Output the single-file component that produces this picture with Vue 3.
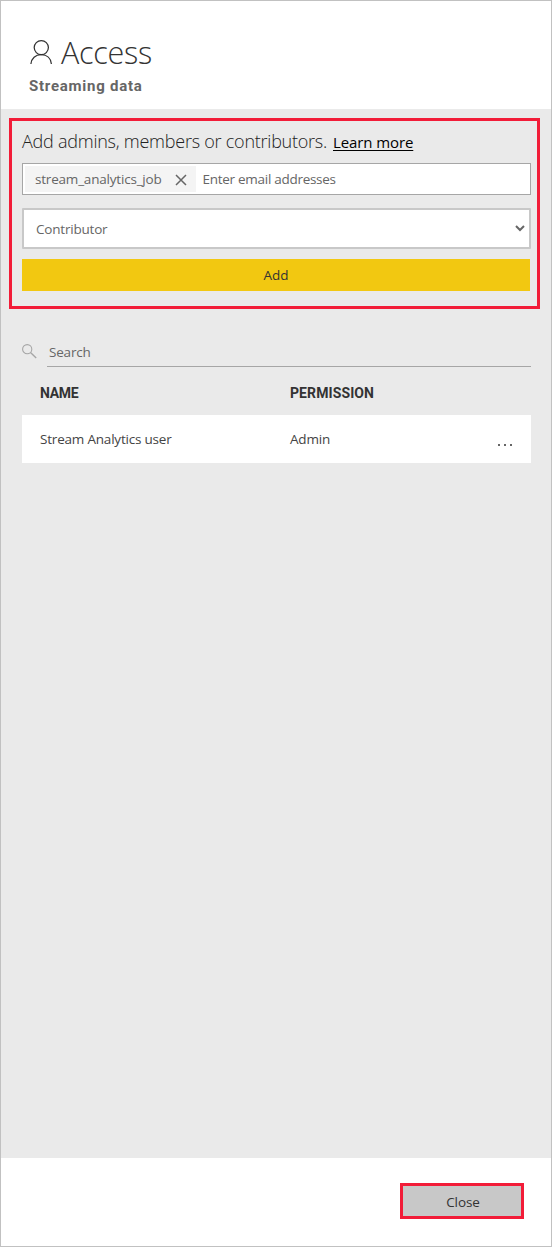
<script setup>
const chips = ['stream_analytics_job']
const users = [{ name: 'Stream Analytics user', permission: 'Admin' }]
</script>

<template>
  <section class="panel">
    <header class="header">
      <div class="title-row">
        <svg class="person" width="24" height="26" viewBox="0 0 24 26" fill="none" stroke="#333" stroke-width="1.25">
          <circle cx="12.3" cy="8.6" r="7.1" />
          <path d="M1.9 25C2.4 19.3 6.5 15.7 12.2 15.7S21.9 19.3 22.4 25" />
        </svg>
        <h1 class="title">Access</h1>
      </div>
      <h2 class="subtitle">Streaming data</h2>
    </header>

    <main class="body">
      <div class="add-box">
        <div class="prompt">
          <span class="prompt-text">Add admins, members or contributors.</span>
          <a class="learn">Learn more</a>
        </div>
        <div class="email-field">
          <span v-for="chip in chips" :key="chip" class="chip">
            <span class="chip-text">{{ chip }}</span>
            <svg width="12" height="12" viewBox="0 0 12 12" stroke="#666" stroke-width="1.5">
              <path d="M1 1L11 11M11 1L1 11" />
            </svg>
          </span>
          <span class="placeholder">Enter email addresses</span>
        </div>
        <div class="select">
          <span class="select-text">Contributor</span>
          <svg width="10" height="7" viewBox="0 0 10 7" fill="none" stroke="#666" stroke-width="2">
            <path d="M1 1L5 5L9 1" />
          </svg>
        </div>
        <button class="add"><span class="add-text">Add</span></button>
      </div>

      <div class="search">
        <svg width="15" height="15" viewBox="0 0 15 15" fill="none" stroke="#a6a6a6" stroke-width="1.1">
          <circle cx="5.2" cy="5.2" r="4.6" />
          <path d="M8.5 8.5L14.2 14" stroke-width="1.4" />
        </svg>
        <div class="search-input"><span class="search-text">Search</span></div>
      </div>

      <div class="grid head">
        <span class="head-name">NAME</span>
        <span class="head-perm">PERMISSION</span>
      </div>
      <div v-for="user in users" :key="user.name" class="grid row">
        <span class="user">{{ user.name }}</span>
        <span class="perm">{{ user.permission }}</span>
        <span class="more"><i></i><i></i><i></i></span>
      </div>
    </main>

    <footer class="footer">
      <button class="close"><span class="close-text">Close</span></button>
    </footer>
  </section>
</template>

<style>
html, body { margin: 0; background: #fff; }
</style>

<style scoped>
.panel {
  box-sizing: border-box;
  width: 552px;
  height: 1247px;
  border: 1px solid #c1c1c1;
  display: flex;
  flex-direction: column;
  background: #fff;
  font-family: "Open Sans", "Noto Sans", sans-serif;
  font-size: 13.5px;
  line-height: 20px;
  letter-spacing: -.2px;
  color: #666;
  white-space: nowrap;
}
.header { box-sizing: border-box; height: 108px; padding: 31px 0 0 28px; }
.title-row { display: flex; height: 40px; }
.person { margin-top: 7px; flex: none; }
.title {
  margin: 0 0 0 8px;
  font-size: 30.5px;
  line-height: 40px;
  font-weight: 300;
  letter-spacing: -.25px;
  color: #333;
}
.subtitle {
  margin: 4px 0 0;
  font-family: Roboto, sans-serif;
  font-size: 15px;
  line-height: 20px;
  font-weight: 700;
  letter-spacing: .75px;
  color: #666;
}
.body {
  box-sizing: border-box;
  flex: none;
  height: 1049px;
  background: #eaeaea;
  padding: 9px 11px 0 8px;
}
.add-box {
  box-sizing: border-box;
  width: 531px;
  height: 191px;
  border: 3px solid #f21c38;
  padding: 8px 6px 0 10px;
}
.prompt { display: flex; align-items: baseline; height: 24px; line-height: 24px; color: #333; }
.prompt-text { width: 311px; font-size: 18px; font-weight: 300; letter-spacing: -.24px; color: #222; }
.learn { font-size: 15px; letter-spacing: -.1px; color: #000; text-decoration: underline; text-underline-offset: 2px; }
.email-field {
  box-sizing: border-box;
  margin-top: 10px;
  height: 32px;
  border: 1px solid #a6a6a6;
  background: #fff;
  padding: 2px;
  display: flex;
  align-items: center;
}
.chip {
  box-sizing: border-box;
  width: 171px;
  height: 26px;
  padding: 0 9px 0 10px;
  background: #f4f4f4;
  display: flex;
  align-items: center;
  justify-content: space-between;
}
.chip svg { margin-top: 2px; }
.placeholder { margin-left: 6.5px; letter-spacing: -.28px; }
.select {
  box-sizing: border-box;
  margin-top: 13px;
  height: 41px;
  border: 2px solid #c8c8c8;
  border-radius: 1px;
  background: #fff;
  padding: 1px 4px 0 12px;
  display: flex;
  align-items: center;
  justify-content: space-between;
}
.select svg { margin-bottom: 1px; }
.add {
  display: block;
  width: 508px;
  height: 32px;
  margin: 10px 0 0;
  padding: 0;
  border: 0;
  background: #f2c811;
  font: inherit;
  letter-spacing: -.1px;
  color: #333;
}
.search { display: flex; margin: 34px 0 0 13px; width: 509px; }
.search svg { flex: none; margin-top: 1px; }
.search-input {
  box-sizing: border-box;
  height: 24px;
  flex: 1;
  margin-left: 10px;
  padding-left: 2px;
  border-bottom: 1px solid #a6a6a6;
}
.search-text { display: block; margin-top: -1px; }
.grid {
  display: grid;
  grid-template-columns: 250px 206px 20px;
  align-items: center;
  box-sizing: border-box;
  width: 509px;
  margin-left: 13px;
  padding-left: 18px;
}
.head {
  height: 48px;
  padding-top: 4px;
  font-family: Roboto, sans-serif;
  font-size: 14px;
  font-weight: 700;
  color: #333;
}
.head-name { letter-spacing: -.3px; }
.head-perm { letter-spacing: .1px; }
.row { height: 48px; background: #fff; color: #444; }
.more { display: flex; gap: 4px; padding: 12px 0 0 2px; }
.more i { width: 2px; height: 2px; background: #666; }
.footer { display: flex; justify-content: flex-end; padding: 25px 27px 0 0; }
.close {
  box-sizing: border-box;
  width: 124px;
  height: 36px;
  padding: 2px 0 0 2px;
  border: 3px solid #f21c38;
  background: #c8c8c8;
  font: inherit;
  letter-spacing: -.1px;
  color: #333;
}
</style>
